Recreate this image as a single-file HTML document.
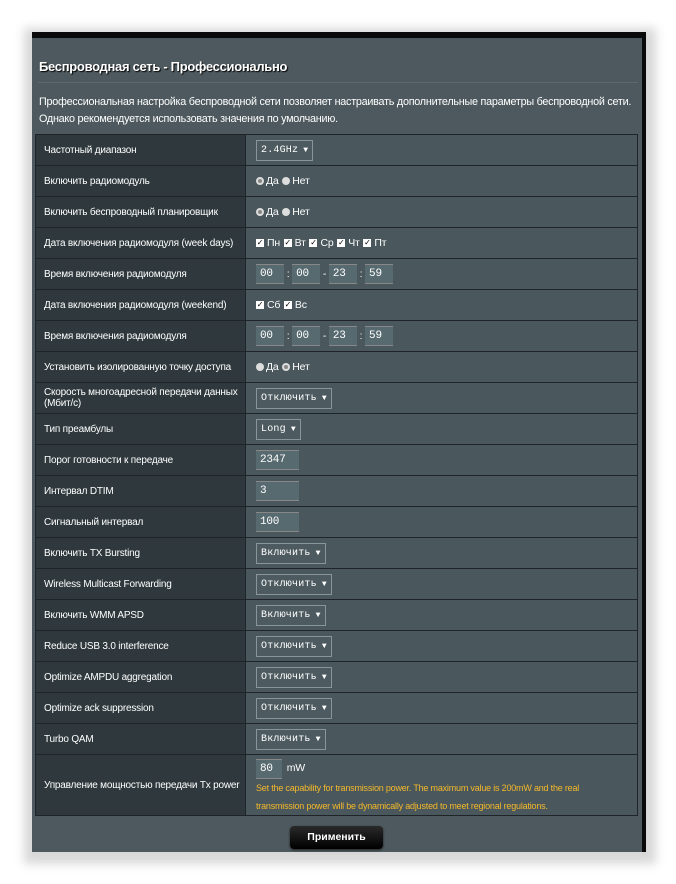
<!DOCTYPE html>
<html><head><meta charset="utf-8"><style>
*{box-sizing:border-box;margin:0;padding:0}
body{width:676px;height:884px;background:#fff;position:relative;overflow:hidden;font-family:"Liberation Sans",Arial,sans-serif;}
.shadow{position:absolute;left:24px;top:28px;width:632px;height:836px;background:#d8d8d8;filter:blur(5px)}
.panel{position:absolute;left:32px;top:32px;width:614px;height:820px;background:#4d595e;border-top:6px solid #0a0a0a;border-right:4px solid #0a0a0a}
h1{position:absolute;left:7px;top:21px;font-size:13px;color:#fff;font-weight:bold;text-shadow:1px 1px 1px #000;letter-spacing:-0.3px}
.hr{position:absolute;left:6px;top:44px;width:600px;height:1px;background:#5c686c}
.desc{position:absolute;left:7px;top:56px;font-size:10.8px;color:#fff;line-height:17px;letter-spacing:-0.25px;white-space:nowrap}
table{position:absolute;left:3px;top:96px;width:603px;border-collapse:collapse}
td{border:1px solid #1e2427;height:31px;font-size:10px;color:#fff;vertical-align:middle;letter-spacing:-0.2px}
td.l{width:210px;background:#2f393d;padding-left:8px}
td.v{background:#4a575c;padding-left:10px;font-size:10.5px}
.sel{display:inline-block;height:21px;border:1px solid #8a9599;background:#4d5b60;color:#fff;font-family:"Liberation Mono",monospace;font-size:10px;line-height:19px;padding:0 4px;letter-spacing:0.2px}
.sel:after{content:" ▼";font-size:8px}
.in{display:inline-block;width:43px;height:20px;background:#576a70;border-top:1px solid #888;border-bottom:1px solid #888;color:#fff;font-family:"Liberation Mono",monospace;font-size:11px;line-height:18px;padding-left:4px;vertical-align:middle}
.t{width:28px}
.r{display:inline-block;width:8px;height:8px;border-radius:50%;background:#ddd;vertical-align:middle;margin-right:2px}
.r.o{background:#888;border:2px solid #ddd}
.c{display:inline-block;width:8px;height:8px;background:#fff;font-size:8px;line-height:8px;color:#000;text-align:center;vertical-align:middle;margin-right:3px}
.g{margin-right:1px}
.y{color:#f5b92a;font-size:9px;line-height:18px;letter-spacing:-0.2px}
.btn{position:absolute;left:258px;top:788px;width:93px;height:23px;border-radius:4px;background:linear-gradient(#2a2a2a,#000);color:#fff;font-weight:bold;font-size:10.5px;text-align:center;line-height:23px;box-shadow:0 1px 2px #222}
</style></head><body>
<div class="shadow"></div>
<div class="panel">
<h1>Беспроводная сеть - Профессионально</h1>
<div class="hr"></div>
<div class="desc">Профессиональная настройка беспроводной сети позволяет настраивать дополнительные параметры беспроводной сети.<br>Однако рекомендуется использовать значения по умолчанию.</div>
<table>
<tr><td class="l">Частотный диапазон</td><td class="v"><span class="sel">2.4GHz</span></td></tr>
<tr><td class="l">Включить радиомодуль</td><td class="v"><span class="r o"></span><span class="g">Да</span> <span class="r"></span>Нет</td></tr>
<tr><td class="l">Включить беспроводный планировщик</td><td class="v"><span class="r o"></span><span class="g">Да</span> <span class="r"></span>Нет</td></tr>
<tr><td class="l">Дата включения радиомодуля (week days)</td><td class="v"><span class="c">✓</span><span class="g">Пн</span> <span class="c">✓</span><span class="g">Вт</span> <span class="c">✓</span><span class="g">Ср</span> <span class="c">✓</span><span class="g">Чт</span> <span class="c">✓</span>Пт</td></tr>
<tr><td class="l">Время включения радиомодуля</td><td class="v"><span class="in t">00</span> : <span class="in t">00</span> - <span class="in t">23</span> : <span class="in t">59</span></td></tr>
<tr><td class="l">Дата включения радиомодуля (weekend)</td><td class="v"><span class="c">✓</span><span class="g">Сб</span> <span class="c">✓</span>Вс</td></tr>
<tr><td class="l">Время включения радиомодуля</td><td class="v"><span class="in t">00</span> : <span class="in t">00</span> - <span class="in t">23</span> : <span class="in t">59</span></td></tr>
<tr><td class="l">Установить изолированную точку доступа</td><td class="v"><span class="r"></span><span class="g">Да</span> <span class="r o"></span>Нет</td></tr>
<tr><td class="l">Скорость многоадресной передачи данных (Мбит/с)</td><td class="v"><span class="sel">Отключить</span></td></tr>
<tr><td class="l">Тип преамбулы</td><td class="v"><span class="sel">Long</span></td></tr>
<tr><td class="l">Порог готовности к передаче</td><td class="v"><span class="in">2347</span></td></tr>
<tr><td class="l">Интервал DTIM</td><td class="v"><span class="in">3</span></td></tr>
<tr><td class="l">Сигнальный интервал</td><td class="v"><span class="in">100</span></td></tr>
<tr><td class="l">Включить TX Bursting</td><td class="v"><span class="sel">Включить</span></td></tr>
<tr><td class="l">Wireless Multicast Forwarding</td><td class="v"><span class="sel">Отключить</span></td></tr>
<tr><td class="l">Включить WMM APSD</td><td class="v"><span class="sel">Включить</span></td></tr>
<tr><td class="l">Reduce USB 3.0 interference</td><td class="v"><span class="sel">Отключить</span></td></tr>
<tr><td class="l">Optimize AMPDU aggregation</td><td class="v"><span class="sel">Отключить</span></td></tr>
<tr><td class="l">Optimize ack suppression</td><td class="v"><span class="sel">Отключить</span></td></tr>
<tr><td class="l">Turbo QAM</td><td class="v"><span class="sel">Включить</span></td></tr>
<tr><td class="l" style="height:61px">Управление мощностью передачи Tx power</td><td class="v" style="padding-top:3px"><span class="in" style="width:26px">80</span> <span style="margin-left:2px">mW</span><div class="y">Set the capability for transmission power. The maximum value is 200mW and the real<br>transmission power will be dynamically adjusted to meet regional regulations.</div></td></tr>
</table>
<div class="btn">Применить</div>
</div>
</body></html>
